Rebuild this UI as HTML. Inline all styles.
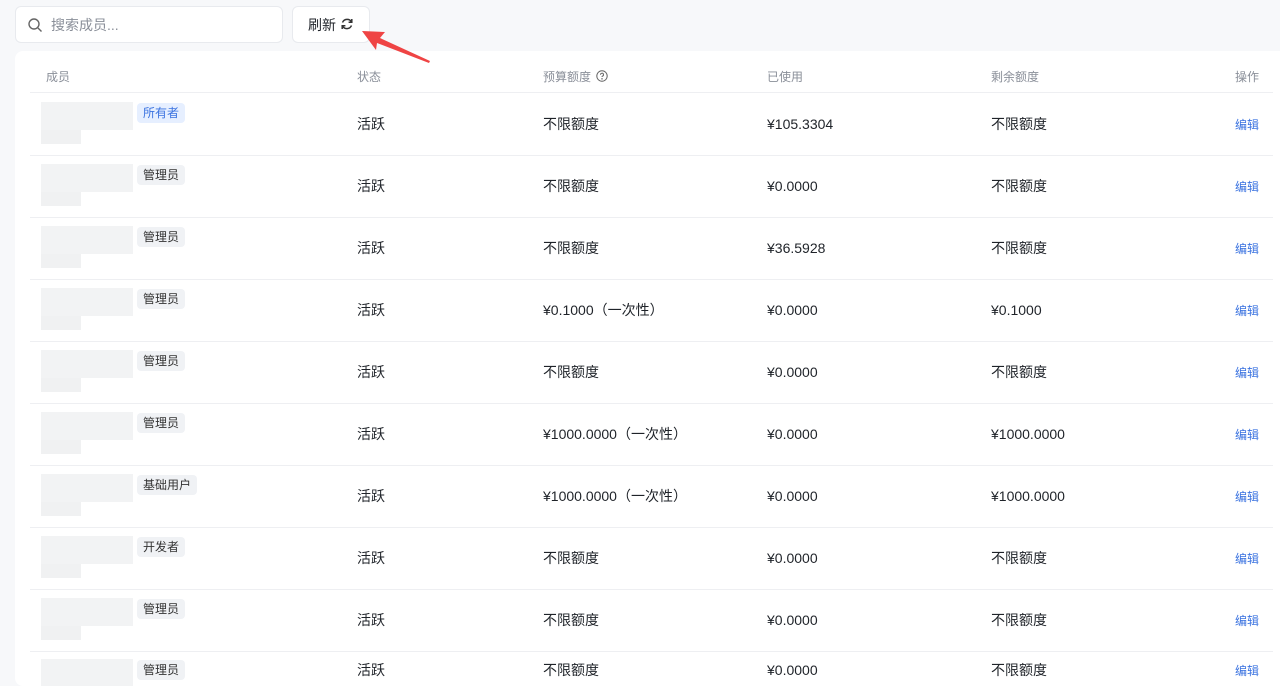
<!DOCTYPE html><html><head><meta charset="utf-8"><style>
html,body{margin:0;width:1280px;height:686px;overflow:hidden}
body{background:#f7f8fa;font-family:"Liberation Sans","Noto Sans CJK SC",sans-serif;position:relative}
.a{position:absolute}
.search{left:15px;top:6px;width:268px;height:37px;background:#fff;border:1px solid #e8eaee;border-radius:6px;box-sizing:border-box}
.btn{left:292px;top:6px;width:78px;height:37px;background:#fff;border:1px solid #e8eaee;border-radius:6px;box-sizing:border-box}
.card{left:15px;top:51px;width:1290px;height:635px;background:#fff;border-radius:8px}
.h{top:68px;font-size:12px;color:#8a8f99}
.line{left:30px;width:1243px;height:1px;background:#eeeff2}
.c{font-size:14px;color:#1f2329;line-height:20px}
.e{font-size:12px;color:#3b73e0;line-height:20px}
.tag{font-size:12px;color:#333;background:#f0f2f5;border-radius:4px;padding:0 6px;line-height:20px}
.own{background:#e6efff;color:#3b73e0}
.av{width:92px;height:42px}
</style></head><body>
<div class="a search"><svg class="a" style="left:11px;top:10px" width="16" height="16" viewBox="0 0 16 16" fill="none" stroke="#666" stroke-width="1.4"><circle cx="7" cy="7" r="5"/><path d="M11 11l3.5 3.5"/></svg><span class="a" style="left:35px;top:8px;font-size:14px;color:#8a8f99">搜索成员...</span></div>
<div class="a btn"><span class="a" style="left:15px;top:8px;font-size:14px;color:#1f2329">刷新</span><svg class="a" style="left:47px;top:10px" width="14" height="14" viewBox="0 0 14 14" fill="none" stroke="#333" stroke-width="1.5"><path d="M11.5 5A5 5 0 0 0 2.5 5.5M2.5 9A5 5 0 0 0 11.5 8.5"/><path d="M11.8 2v3.2H8.6M2.2 12V8.8h3.2"/></svg></div>
<div class="a card"></div>
<svg class="a" style="left:355px;top:25px;z-index:5" width="80" height="42" viewBox="355 25 80 42"><path d="M362 31L385 32L380 38L430 61L429 63L377 43L376 50Z" fill="#ef4444"/></svg>
<div class="a h" style="left:46px">成员</div><div class="a h" style="left:357px">状态</div>
<div class="a h" style="left:543px">预算额度 <svg width="12" height="12" viewBox="0 0 12 12" style="vertical-align:-1px;margin-left:2px" fill="none" stroke="#666"><circle cx="6" cy="6" r="5.2"/><path d="M4.5 4.7a1.5 1.5 0 1 1 2 1.4c-.4.2-.5.5-.5.9"/><circle cx="6" cy="8.8" r=".3"/></svg></div>
<div class="a h" style="left:767px">已使用</div><div class="a h" style="left:991px">剩余额度</div><div class="a h" style="left:1235px">操作</div>
<div class="a line" style="top:92px"></div>
<div id="rows"></div>
<script>
var d=[["所有者","不限额度","¥105.3304","不限额度"],["管理员","不限额度","¥0.0000","不限额度"],["管理员","不限额度","¥36.5928","不限额度"],["管理员","¥0.1000（一次性）","¥0.0000","¥0.1000"],["管理员","不限额度","¥0.0000","不限额度"],["管理员","¥1000.0000（一次性）","¥0.0000","¥1000.0000"],["基础用户","¥1000.0000（一次性）","¥0.0000","¥1000.0000"],["开发者","不限额度","¥0.0000","不限额度"],["管理员","不限额度","¥0.0000","不限额度"],["管理员","不限额度","¥0.0000","不限额度"]];
var h="";d.forEach(function(r,i){var t=93+62*i;var ty=i==9?660:t+21;var tg=i==9?660:t+10;
h+='<div class="a av" style="left:41px;top:'+(i==9?659:t+9)+'px;background:linear-gradient(#f2f3f4 0 0) 0 0/92px 28px no-repeat,linear-gradient(#f0f1f2 0 0) 0 28px/40px 14px no-repeat"></div>';
h+='<div class="a tag'+(i==0?' own':'')+'" style="left:137px;top:'+tg+'px">'+r[0]+'</div>';
h+='<div class="a c" style="left:357px;top:'+ty+'px">活跃</div><div class="a c" style="left:543px;top:'+ty+'px">'+r[1]+'</div><div class="a c" style="left:767px;top:'+ty+'px">'+r[2]+'</div><div class="a c" style="left:991px;top:'+ty+'px">'+r[3]+'</div><div class="a e" style="left:1235px;top:'+(ty+1)+'px">编辑</div>';
if(i<9)h+='<div class="a line" style="top:'+(t+62)+'px"></div>';});
document.getElementById("rows").innerHTML=h;
</script>
</body></html>
